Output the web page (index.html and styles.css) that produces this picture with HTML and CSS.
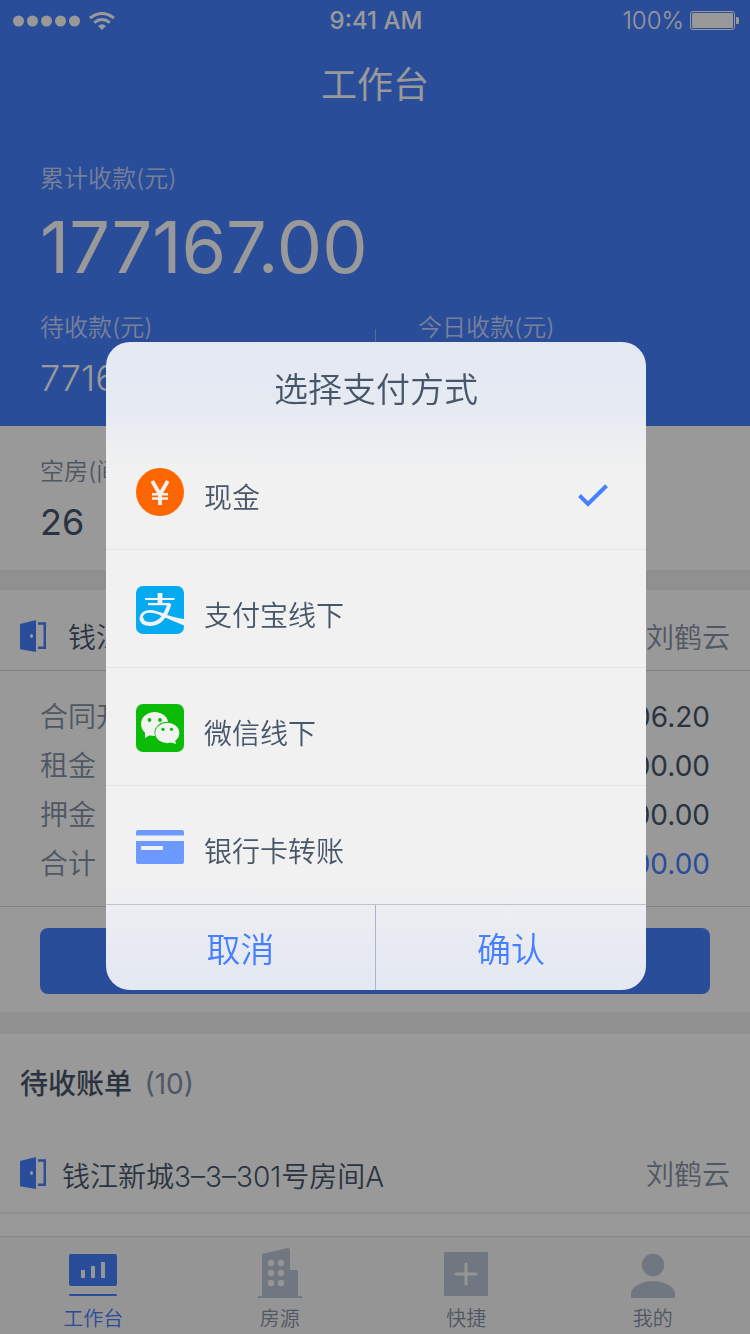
FILE: index.html
```html
<!DOCTYPE html>
<html lang="zh-CN">
<head>
<meta charset="utf-8">
<meta name="viewport" content="width=device-width, initial-scale=1">
<title>工作台</title>
<link rel="stylesheet" href="styles.css">
</head>
<body>
<svg class="defs" width="0" height="0" aria-hidden="true">
  <symbol id="door" viewBox="0 0 26 32">
    <path fill="currentColor" fill-rule="evenodd" d="M0 4 16 0v32L0 29.200zM11.500 14a1.500 2 0 1 0 .01 0z"/>
    <path fill="none" stroke="currentColor" stroke-width="2.500" d="M18 3.400h6.800v24.400H18"/>
  </symbol>
</svg>
<div class="page">
  <header class="hero">
    <div class="status">
      <div class="status-left">
        <svg width="68" height="12" viewBox="0 0 68 12" fill="currentColor" aria-hidden="true"><circle cx="5.500" cy="6" r="5.500"/><circle cx="19.500" cy="6" r="5.500"/><circle cx="33.500" cy="6" r="5.500"/><circle cx="47.500" cy="6" r="5.500"/><circle cx="61.500" cy="6" r="5.500"/></svg>
        <svg width="26" height="18" viewBox="0 0 26 18" aria-hidden="true"><g fill="none" stroke="currentColor" stroke-width="3"><path d="M1 6Q13-3.200 25 6"/><path d="M5.200 10.600Q13 4.400 20.800 10.600"/></g><path fill="currentColor" d="M13 18 9 14Q13 10.400 17 14z"/></svg>
      </div>
      <span class="status-time">9:41 AM</span>
      <div class="status-right">
        <span>100%</span>
        <svg width="49" height="19" viewBox="0 0 49 19" aria-hidden="true"><rect x=".5" y=".5" width="44" height="18" rx="2.500" fill="none" stroke="currentColor"/><rect x="2" y="2" width="41" height="15" rx="1" fill="currentColor"/><path fill="currentColor" d="M46 6h1.500q1.500 0 1.500 1.500v4q0 1.500-1.500 1.500H46z"/></svg>
      </div>
    </div>
    <h1 class="hero-title">工作台</h1>
    <div class="summary">
      <p class="label">累计收款(元)</p>
      <p class="total">177167.00</p>
      <div class="summary-split">
        <div class="summary-cell">
          <p class="label">待收款(元)</p>
          <p class="amount">77167</p>
        </div>
        <div class="summary-cell">
          <p class="label">今日收款(元)</p>
        </div>
      </div>
    </div>
  </header>
  <main class="content">
    <section class="vacancy">
      <p class="label">空房(间)</p>
      <p class="amount">26</p>
    </section>
    <section class="block">
      <div class="room room-first">
        <svg class="door" width="26" height="32"><use href="#door"/></svg>
        <span class="room-name">钱江新城</span>
        <span class="room-tenant">刘鹤云</span>
      </div>
      <dl class="fees">
        <div class="fee"><dt>合同开始</dt><dd>1006.20</dd></div>
        <div class="fee"><dt>租金</dt><dd>1000.00</dd></div>
        <div class="fee"><dt>押金</dt><dd>1000.00</dd></div>
        <div class="fee fee-sum"><dt>合计</dt><dd>3000.00</dd></div>
      </dl>
      <div class="action"><button class="primary" type="button" aria-label="收款"></button></div>
    </section>
    <section class="block block-bills">
      <h2 class="bills-title">待收账单 <span class="bills-count">(10)</span></h2>
      <div class="room room-bill">
        <svg class="door" width="26" height="32"><use href="#door"/></svg>
        <span class="room-name">钱江新城3–3–301号房间A</span>
        <span class="room-tenant">刘鹤云</span>
      </div>
    </section>
  </main>
  <nav class="tabs">
    <a class="tab tab-active" href="#">
      <svg width="48" height="50" viewBox="0 0 48 50" fill="currentColor" aria-hidden="true"><path fill-rule="evenodd" d="M2 6h44q2 0 2 2v28q0 2-2 2H2q-2 0-2-2V8q0-2 2-2zM12 22v8h4v-8zM22 18v12h4V18zM32 14v16h4V14z"/><rect y="46" width="48" height="2" rx="1"/></svg>
      <span>工作台</span>
    </a>
    <a class="tab" href="#">
      <svg width="44" height="50" viewBox="0 0 44 50" aria-hidden="true"><path fill="currentColor" d="M4 6 30 0q2 0 2 2v20h8v26h4v2H0v-2h4z"/><g class="tab-hole"><circle cx="13" cy="15" r="3.200"/><circle cx="23" cy="15" r="3.200"/><circle cx="13" cy="25" r="3.200"/><circle cx="23" cy="25" r="3.200"/><circle cx="13" cy="35" r="3.200"/><circle cx="23" cy="35" r="3.200"/></g></svg>
      <span>房源</span>
    </a>
    <a class="tab" href="#">
      <svg width="44" height="50" viewBox="0 0 44 50" aria-hidden="true"><rect y="4" width="44" height="44" rx="1" fill="currentColor"/><path class="tab-plus" d="M22 16v20M12 26h20"/></svg>
      <span>快捷</span>
    </a>
    <a class="tab" href="#">
      <svg width="44" height="50" viewBox="0 0 44 50" fill="currentColor" aria-hidden="true"><circle cx="22" cy="17" r="11.200"/><path d="M0 50v-6C3 37 12 33 22 33s19 4 22 11v6z"/></svg>
      <span>我的</span>
    </a>
  </nav>
</div>
<div class="overlay">
  <form class="dialog" role="dialog" aria-labelledby="dialog-title">
    <h2 class="dialog-title" id="dialog-title">选择支付方式</h2>
    <div class="options">
      <label class="option">
        <svg width="48" height="48" viewBox="0 0 48 48" aria-hidden="true"><circle cx="24" cy="24" r="24" fill="#ff6600"/><path fill="none" stroke="#f3f1f0" stroke-width="3.800" d="M16.200 13 24 26.500 31.800 13M24 25v12"/><path stroke="#f3f1f0" stroke-width="2.400" d="M16 26.200h16M16 30.500h16"/></svg>
        <span class="option-name">现金</span>
        <input class="option-input" type="radio" name="method" checked>
        <svg class="option-check" width="30" height="24" viewBox="0 0 30 24" aria-hidden="true"><path fill="none" stroke="currentColor" stroke-width="4" d="M1.500 11.500 10 20 28.500 1.800"/></svg>
      </label>
      <label class="option">
        <svg width="48" height="48" viewBox="0 0 48 48" aria-hidden="true"><rect width="48" height="48" rx="7" fill="#06aaf0"/><g fill="none" stroke="#f1f3f4"><path stroke-width="4.800" d="M24 7v11"/><path stroke-width="2.200" d="M9 13h29.500M12 18.200h22"/><path stroke-width="4" d="M33.500 17.500C30 30 24 38 14.500 38 8.500 38 5.400 35.500 5.400 31.800"/><path stroke-width="2.800" d="M5.200 32.500C5.200 28 9 25.300 14 25.300c5 0 12 2.800 18 5.500"/></g><path fill="#f1f3f4" d="M24 26.200Q36 31.500 48 33v6.500Q36 34.500 24 29.200z"/></svg>
        <span class="option-name">支付宝线下</span>
        <input class="option-input" type="radio" name="method">
        <svg class="option-check" width="30" height="24" viewBox="0 0 30 24" aria-hidden="true"><path fill="none" stroke="currentColor" stroke-width="4" d="M1.500 11.500 10 20 28.500 1.800"/></svg>
      </label>
      <label class="option">
        <svg width="48" height="48" viewBox="0 0 48 48" aria-hidden="true"><rect width="48" height="48" rx="7" fill="#0abb07"/><g fill="#f1f3f1"><ellipse cx="18.700" cy="20" rx="13.700" ry="12"/><path d="m9 27v7l7-4z"/></g><ellipse cx="31.300" cy="28.800" rx="12.800" ry="11" fill="#0abb07"/><g fill="#f1f3f1"><ellipse cx="31.300" cy="29" rx="12" ry="10.200"/><path d="m33 38 7 2-1.500-6z"/></g><g fill="#0abb07"><circle cx="13.500" cy="16" r="1.900"/><circle cx="24" cy="16" r="1.900"/><circle cx="27" cy="25.300" r="1.600"/><circle cx="35.500" cy="25.300" r="1.600"/></g></svg>
        <span class="option-name">微信线下</span>
        <input class="option-input" type="radio" name="method">
        <svg class="option-check" width="30" height="24" viewBox="0 0 30 24" aria-hidden="true"><path fill="none" stroke="currentColor" stroke-width="4" d="M1.500 11.500 10 20 28.500 1.800"/></svg>
      </label>
      <label class="option">
        <svg width="48" height="48" viewBox="0 0 48 48" aria-hidden="true"><path fill="#6b99ff" d="M0 13.500V10q0-2 2-2h44q2 0 2 2v3.500zM0 19h48v21q0 2-2 2H2q-2 0-2-2z"/><rect x="5" y="24" width="22" height="4" rx="1" fill="#f1f1f1"/></svg>
        <span class="option-name">银行卡转账</span>
        <input class="option-input" type="radio" name="method">
        <svg class="option-check" width="30" height="24" viewBox="0 0 30 24" aria-hidden="true"><path fill="none" stroke="currentColor" stroke-width="4" d="M1.500 11.500 10 20 28.500 1.800"/></svg>
      </label>
    </div>
    <div class="dialog-actions">
      <button class="dialog-button" type="button">取消</button>
      <button class="dialog-button" type="button">确认</button>
    </div>
  </form>
</div>
</body>
</html>
```
FILE: styles.css
```css
* { box-sizing: border-box; }

body {
  margin: 0;
  font-family: Inter, "Noto Sans CJK SC", sans-serif;
  font-size: 28px;
  font-weight: 350;
  color: #475669;
  background: #fff;
}

h1, h2, p, dl, dd { margin: 0; }
svg { flex: none; display: block; }
button { font-family: inherit; border: 0; cursor: pointer; }

.defs { position: absolute; }

.page {
  display: flex;
  flex-direction: column;
  min-height: 100vh;
}

/* Header */
.hero { background: #4680ff; color: #fff; }

.status {
  display: grid;
  grid-template-columns: 1fr auto 1fr;
  align-items: center;
  height: 41px;
  padding: 0 11px 0 13px;
  font-size: 24px;
  font-weight: 350;
}
.status-left, .status-right { display: flex; align-items: center; gap: 8px; }
.status-right { justify-content: flex-end; gap: 6px; }
.status-time { font-weight: 500; }

.hero-title {
  font-size: 36px;
  font-weight: 400;
  line-height: 88px;
  text-align: center;
}

.summary { padding: 32px 40px 26px; }
.label {
  font-size: 24px;
  line-height: 36px;
  color: #8492a6;
}
.hero .label { color: rgba(255, 255, 255, .7); }
.total {
  margin: 14px 0 27px;
  font-size: 72px;
  font-weight: 400;
  line-height: 72px;
}
.amount {
  margin-top: 10px;
  font-size: 36px;
  line-height: 44px;
}
.summary-split { display: grid; grid-template-columns: 1fr 1fr; }
.summary-cell + .summary-cell {
  padding-left: 43px;
  background: linear-gradient(rgba(255, 255, 255, .4), rgba(255, 255, 255, .4)) 0 19px / 1px 60px no-repeat;
}

/* Content */
.content { flex: 1; background: #fff; }

.vacancy { padding: 28px 40px 26px; }
.vacancy .amount { font-weight: 400; }

.block { border-top: 20px solid #f0f0f0; }
.block-bills { border-top-width: 22px; }

.room {
  display: flex;
  align-items: center;
  gap: 16px;
  height: 81px;
  padding: 0 20px;
  border-bottom: 1px solid #d8d8d8;
}
.room-first { gap: 22px; padding-top: 12px; }
.room-bill { height: 80px; border-bottom: 2px solid #efefef; }
.room-bill .room-name { padding-top: 4px; }
.door { color: #4680ff; }
.room-name { flex: 1; }
.room-tenant { color: #8492a6; }

.fees {
  padding: 22px 40px 17px;
  border-bottom: 1px solid #d8d8d8;
}
.fee {
  display: flex;
  justify-content: space-between;
  line-height: 49px;
}
.fee dt { color: #8492a6; }
.fee dd { font-weight: 400; }
.fee-sum dd { color: #4680ff; }

.action { padding: 21px 40px 18px; }
.primary {
  display: block;
  width: 100%;
  height: 66px;
  border-radius: 8px;
  background: #4680ff;
}

.bills-title {
  font-size: 28px;
  font-weight: 500;
  line-height: 100px;
  padding: 0 20px;
}
.bills-count {
  margin-left: 5px;
  font-weight: 400;
  color: #8492a6;
}

/* Tab bar */
.tabs {
  display: grid;
  grid-template-columns: repeat(4, 1fr);
  height: 98px;
  padding-right: 4px;
  border-top: 1px solid #e0e2ea;
  background: #f9f9f9;
}
.tab {
  display: flex;
  flex-direction: column;
  align-items: center;
  gap: 5px;
  padding-top: 11px;
  color: #8492a6;
  font-size: 20px;
  line-height: 32px;
  text-decoration: none;
}
.tab svg { color: #bdc7d6; }
.tab-active, .tab-active svg { color: #4680ff; }
.tab-hole { fill: #f9f9f9; }
.tab-plus { fill: none; stroke: #f9f9f9; stroke-width: 3; stroke-linecap: round; }

/* Payment dialog */
.overlay {
  position: fixed;
  inset: 0;
  display: flex;
  align-items: center;
  justify-content: center;
  padding: 0 0 2px 2px;
  background: rgba(0, 0, 0, .4);
}
.dialog {
  width: 100%;
  max-width: 540px;
  border-radius: 24px;
  overflow: hidden;
  background: linear-gradient(#e4e8f2, #e6eaf3 68px, #ebedf1 92px, #f1f1f1 130px, #f1f1f1 calc(100% - 110px), #e7eaf2 calc(100% - 40px), #e4e8f2);
}
.dialog-title {
  height: 90px;
  padding-top: 6px;
  font-size: 34px;
  font-weight: 350;
  line-height: 84px;
  text-align: center;
}
.option {
  display: flex;
  align-items: center;
  gap: 20px;
  height: 118px;
  padding: 2px 38px 0 30px;
  border-bottom: 1px solid #e0e4ed;
  cursor: pointer;
}
.option:last-child { border-bottom: 0; }
.option-name { flex: 1; padding-top: 8px; }
.option-input { position: absolute; opacity: 0; }
.option-check { margin-top: 8px; color: #4680ff; visibility: hidden; }
.option-input:checked + .option-check { visibility: visible; }

.dialog-actions {
  display: grid;
  grid-template-columns: 1fr 1fr;
  border-top: 1px solid #bfc1cc;
}
.dialog-button {
  height: 85px;
  padding: 0;
  background: none;
  color: #4680ff;
  font-size: 34px;
  font-weight: 350;
}
.dialog-button:first-child { border-right: 1px solid #aab4cf; }
```
